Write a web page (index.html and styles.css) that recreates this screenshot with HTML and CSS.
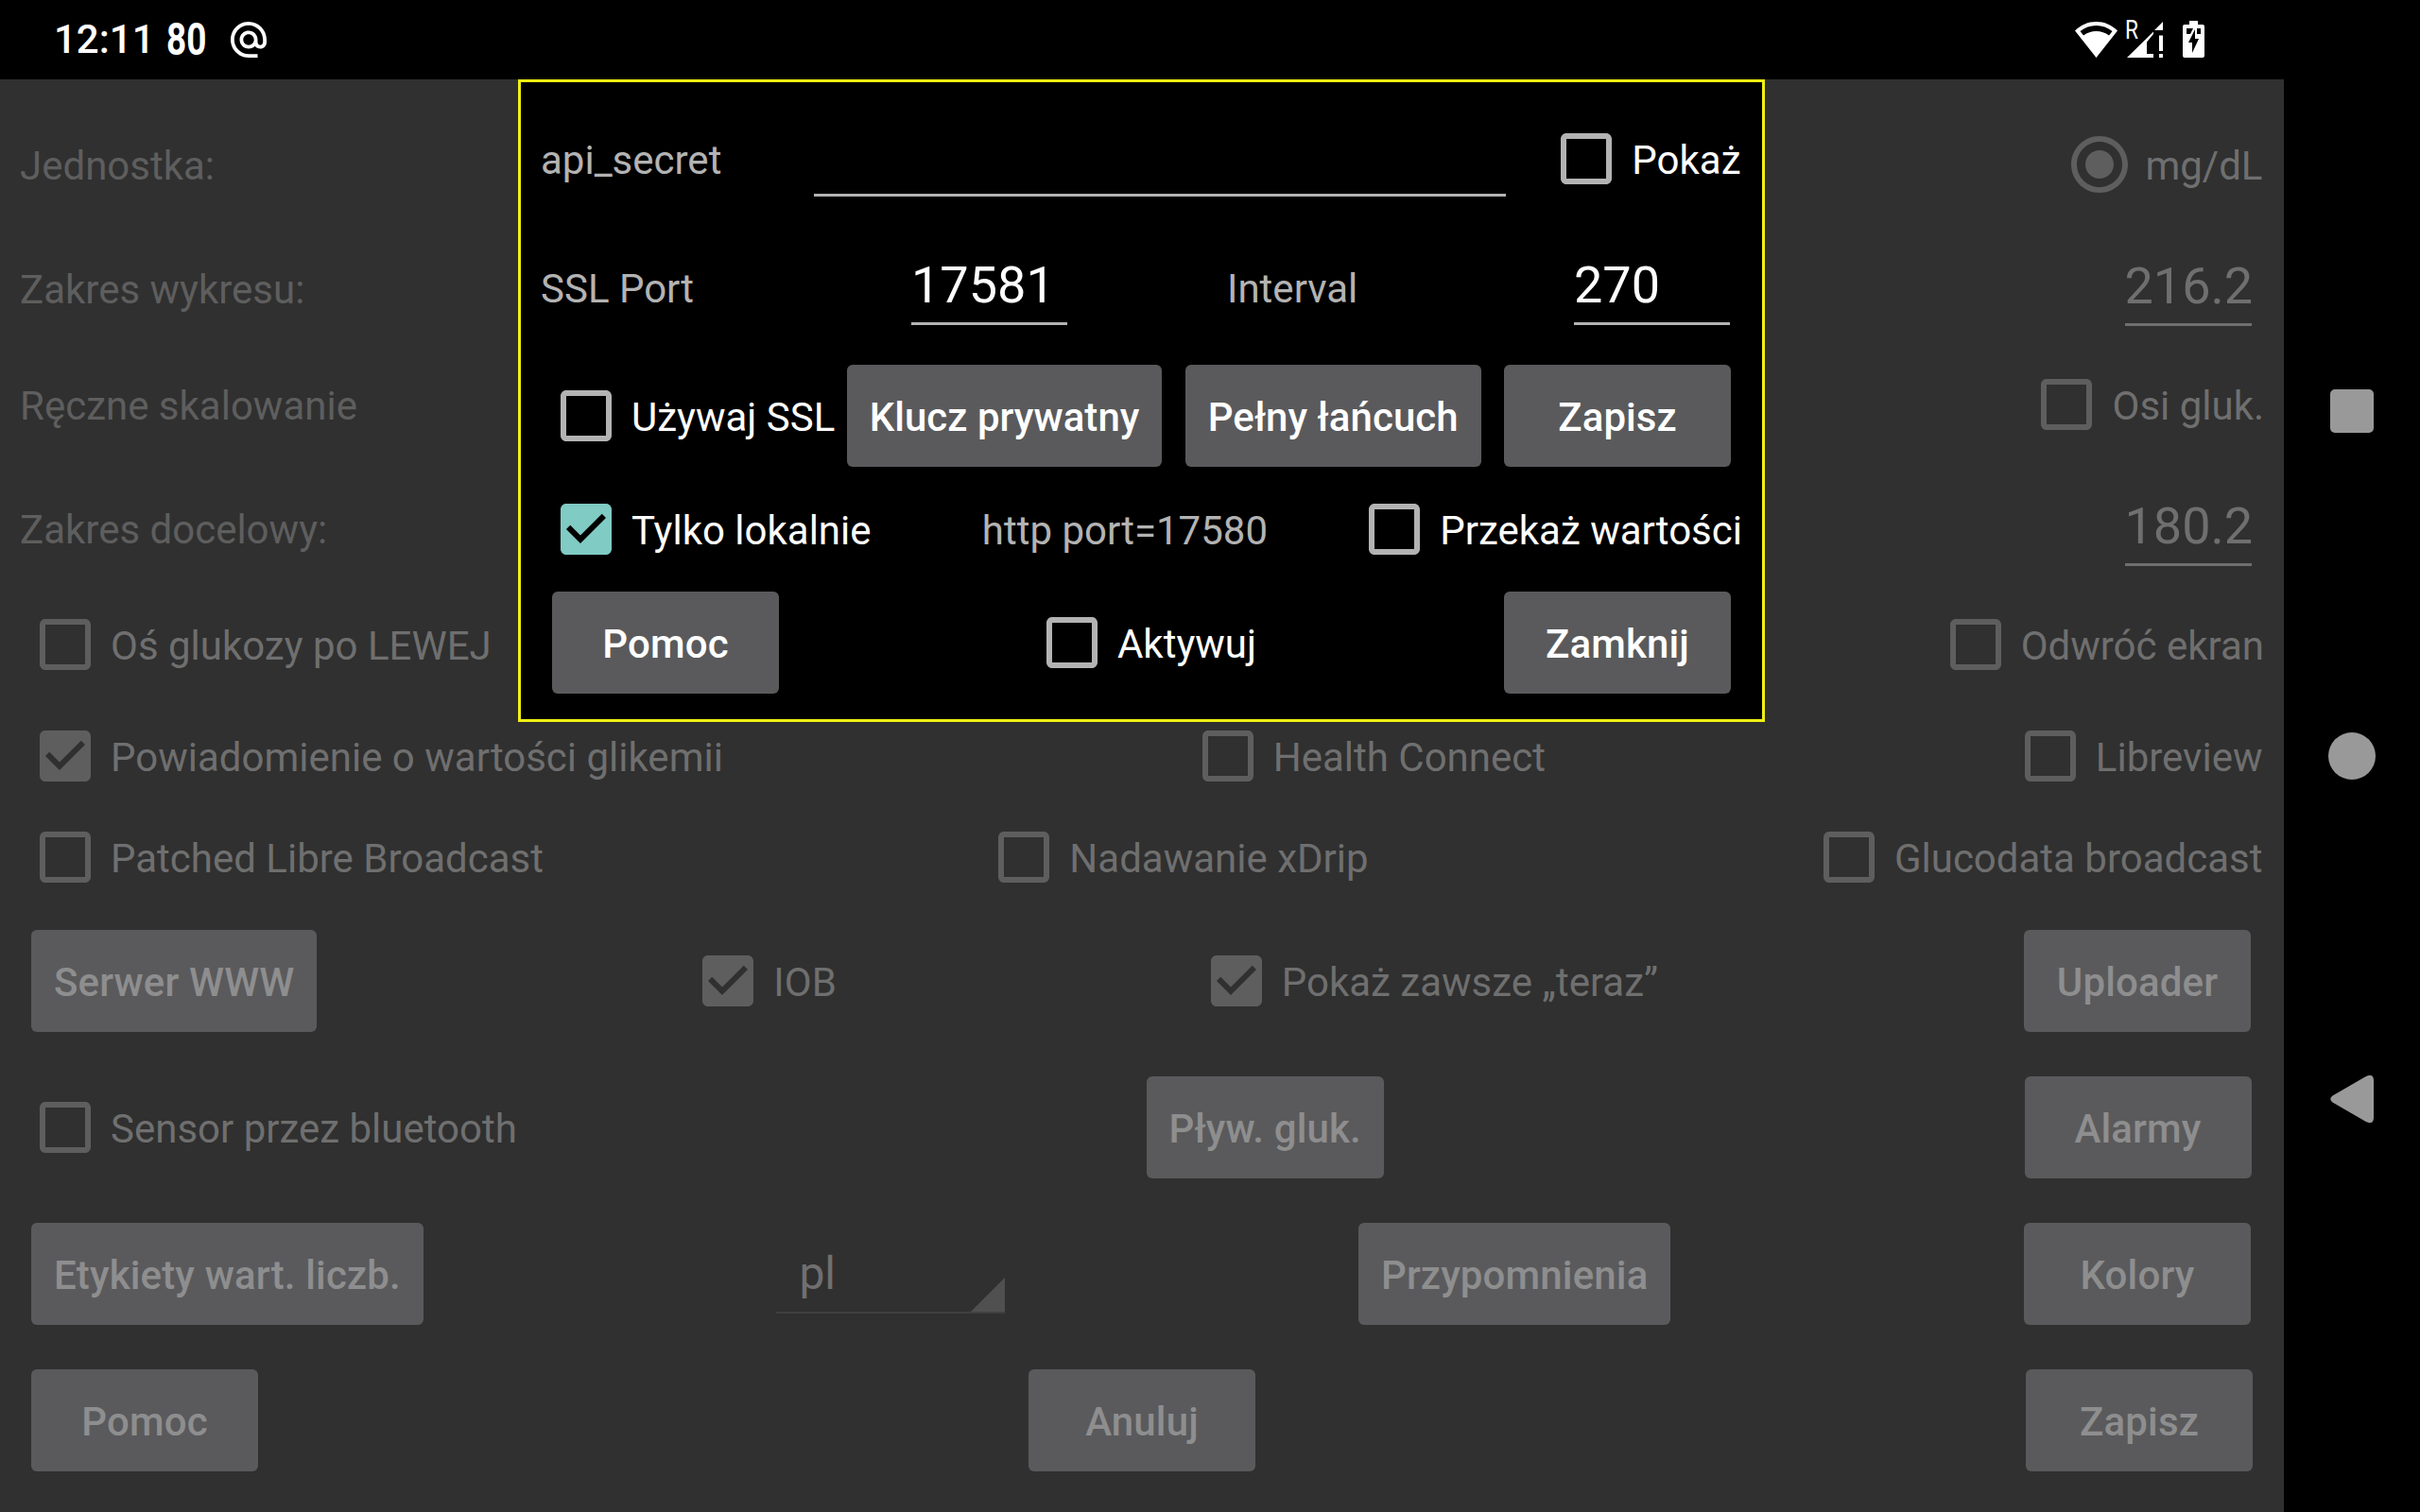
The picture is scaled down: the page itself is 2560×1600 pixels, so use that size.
FILE: index.html
```html
<!DOCTYPE html>
<html lang="pl">
<head>
<meta charset="utf-8">
<title>Ustawienia</title>
<link rel="stylesheet" href="styles.css">
</head>
<body>
<svg class="defs" aria-hidden="true">
  <symbol id="box" viewBox="3 3 18 18"><path d="M19 5v14H5V5h14m0-2H5c-1.1 0-2 .9-2 2v14c0 1.1.9 2 2 2h14c1.1 0 2-.9 2-2V5c0-1.1-.9-2-2-2z"/></symbol>
  <symbol id="box-on" viewBox="3 3 18 18"><path d="M19 3H5c-1.11 0-2 .9-2 2v14c0 1.1.89 2 2 2h14c1.11 0 2-.9 2-2V5c0-1.1-.89-2-2-2zm-9 14l-5-5 1.41-1.41L10 14.17l7.59-7.59L19 8l-9 9z"/></symbol>
  <symbol id="radio-on" viewBox="2 2 20 20"><path d="M12 7c-2.76 0-5 2.24-5 5s2.240 5 5 5 5-2.240 5-5-2.240-5-5-5zm0-5C6.480 2 2 6.480 2 12s4.480 10 10 10 10-4.480 10-10S17.520 2 12 2zm0 18c-4.420 0-8-3.580-8-8s3.580-8 8-8 8 3.580 8 8-3.580 8-8 8z"/></symbol>
</svg>
<div class="screen">
  <div class="app">
    <header class="status">
      <div class="status-left">
        <span class="clock">12:11</span>
        <span class="glucose">80</span>
        <svg class="at" viewBox="2 1.95 20 20"><path d="M12 1.950c-5.520 0-10 4.480-10 10s4.480 10 10 10h5v-2h-5c-4.340 0-8-3.660-8-8s3.660-8 8-8 8 3.660 8 8v1.430c0 .79-.71 1.570-1.500 1.570s-1.500-.78-1.500-1.570v-1.430c0-2.760-2.240-5-5-5s-5 2.240-5 5 2.240 5 5 5c1.380 0 2.640-.56 3.540-1.470.65.89 1.770 1.470 2.960 1.470 1.970 0 3.500-1.600 3.500-3.570v-1.430c0-5.520-4.480-10-10-10zm0 13c-1.660 0-3-1.340-3-3s1.340-3 3-3 3 1.340 3 3-1.340 3-3 3z"/></svg>
      </div>
      <div class="status-right">
        <svg class="wifi" viewBox="0 0 45 38"><path fill-rule="evenodd" d="M22.500 0C14 0 6.300 3.300 0 9.500L22.500 38 45 9.500C38.700 3.300 31 0 22.500 0zM5.500 10C10.500 6.200 16.200 4 22.500 4s12 2.200 17 6l-3.500 4.500C32 11.500 27.500 10 22.500 10S13 11.500 9 14.500z"/></svg>
        <svg class="signal" viewBox="0 0 40 40"><text x="-1" y="19" textLength="14" lengthAdjust="spacingAndGlyphs">R</text><path d="M39 1v9h-9zM29 11.500v2.500l-7 8.500V35h7v4H1zM35 15.500h4V32h-4zM35 35h4v4h-4z"/></svg>
        <svg class="battery" viewBox="0 0 23 39"><path fill-rule="evenodd" d="M7 0h9v4h5q2 0 2 2v31q0 2-2 2H2q-2 0-2-2V6q0-2 2-2h5zM4 8v6h4l3-6zM15 8v6h4V8zM13 9L6 23h4v11l7-15h-4z"/></svg>
      </div>
    </header>

    <main class="settings">
      <div class="row row-inset"><span class="label">Jednostka:</span><span class="check radio"><svg><use href="#radio-on"/></svg><span>mg/dL</span></span></div>
      <div class="row row-inset"><span class="label">Zakres wykresu:</span><span class="field range">216.2</span></div>
      <div class="row"><span class="label">Ręczne skalowanie</span><span class="check"><svg><use href="#box"/></svg><span>Osi gluk.</span></span></div>
      <div class="row row-inset"><span class="label">Zakres docelowy:</span><span class="field range">180.2</span></div>
      <div class="row"><span class="check"><svg><use href="#box"/></svg><span>Oś glukozy po LEWEJ</span></span><span class="check"><svg><use href="#box"/></svg><span>Odwróć ekran</span></span></div>
      <div class="row row-inset"><span class="check"><svg><use href="#box-on"/></svg><span>Powiadomienie o wartości glikemii</span></span><span class="check"><svg><use href="#box"/></svg><span>Health Connect</span></span><span class="check"><svg><use href="#box"/></svg><span>Libreview</span></span></div>
      <div class="row row-inset"><span class="check"><svg><use href="#box"/></svg><span>Patched Libre Broadcast</span></span><span class="check"><svg><use href="#box"/></svg><span>Nadawanie xDrip</span></span><span class="check"><svg><use href="#box"/></svg><span>Glucodata broadcast</span></span></div>
      <div class="row row-deep"><button class="btn">Serwer WWW</button><span class="check"><svg><use href="#box-on"/></svg><span>IOB</span></span><span class="check"><svg><use href="#box-on"/></svg><span>Pokaż zawsze „teraz”</span></span><button class="btn">Uploader</button></div>
      <div class="row row-inset"><span class="check"><svg><use href="#box"/></svg><span>Sensor przez bluetooth</span></span><button class="btn">Pływ. gluk.</button><button class="btn">Alarmy</button></div>
      <div class="row row-deep"><button class="btn">Etykiety wart. liczb.</button><span class="spinner"><span>pl</span><svg viewBox="0 0 36 36"><path d="M36 0v36H0z"/></svg></span><button class="btn">Przypomnienia</button><button class="btn">Kolory</button></div>
      <div class="row"><button class="btn">Pomoc</button><button class="btn">Anuluj</button><button class="btn">Zapisz</button></div>
    </main>

    <section class="dialog">
      <div class="row row-inset"><span class="label">api_secret</span><span class="field secret"></span><span class="check"><svg><use href="#box"/></svg><span>Pokaż</span></span></div>
      <div class="row ports"><span class="label port-label">SSL Port</span><span class="field port">17581</span><span class="label interval-label">Interval</span><span class="field port">270</span></div>
      <div class="row row-tight"><span class="check"><svg><use href="#box"/></svg><span>Używaj SSL</span></span><button class="btn">Klucz prywatny</button><button class="btn">Pełny łańcuch</button><button class="btn">Zapisz</button></div>
      <div class="row"><span class="check on"><svg><use href="#box-on"/></svg><span>Tylko lokalnie</span></span><span class="label http-port">http port=17580</span><span class="check"><svg><use href="#box"/></svg><span>Przekaż wartości</span></span></div>
      <div class="row"><button class="btn">Pomoc</button><span class="check"><svg><use href="#box"/></svg><span>Aktywuj</span></span><button class="btn">Zamknij</button></div>
    </section>
  </div>

  <nav class="nav">
    <svg class="recent" viewBox="0 0 46 46"><rect width="46" height="46" rx="5"/></svg>
    <svg class="home" viewBox="0 0 50 50"><circle cx="25" cy="25" r="25"/></svg>
    <svg class="back" viewBox="0 0 46 50"><path d="M37 1.500Q45.500-3 46 5v40q-.5 8-9 3.500L2.500 28.500Q-2 25 2.500 21.500z"/></svg>
  </nav>
</div>
</body>
</html>
```
FILE: styles.css
```css
* { box-sizing: border-box; }

body {
  margin: 0;
  background: #000;
  font-family: Roboto, "Noto Sans", sans-serif;
  font-size: 42px;
  line-height: normal;
  white-space: nowrap;
}

.defs { display: none; }

.screen {
  display: flex;
  width: 2560px;
  height: 1600px;
  overflow: hidden;
}

.app {
  position: relative;
  display: flex;
  flex-direction: column;
  width: 2416px;
}

/* Status bar */
.status {
  display: flex;
  justify-content: space-between;
  height: 84px;
  padding: 0 84px 1px 57px;
  color: #fff;
  fill: #fff;
}

.status-left,
.status-right { display: flex; align-items: center; }

.clock { font-weight: 500; }

.glucose {
  width: 41px;
  margin: 0 27px 0 12px;
  font-size: 48px;
  font-weight: 700;
  transform: scaleX(.77);
  transform-origin: left;
}

.at { width: 38px; height: 38px; }
.wifi { width: 45px; height: 38px; margin-right: 9px; }
.signal { width: 40px; height: 40px; margin-right: 20px; overflow: visible; font-size: 27px; }
.battery { width: 23px; height: 39px; }

/* Rows shared by the settings page and the dialog */
.row {
  display: flex;
  align-items: center;
  justify-content: space-between;
  padding: 0 21px;
}

.label { padding-top: 3px; color: var(--label); }

.check {
  display: flex;
  align-items: center;
  gap: 21px;
  padding-left: 21px;
  color: var(--text);
}
.check svg { width: 54px; height: 54px; fill: var(--icon); }
.check span { padding-top: 3px; }
.check.on svg { fill: #80cbc4; }

.radio { gap: 18px; padding-left: 18px; }
.radio svg { width: 60px; height: 60px; }

.field {
  height: 74px;
  margin: 6px 12px 0;
  border-bottom: 3px solid var(--line);
  color: var(--text);
  font-size: 54px;
}

.btn {
  height: 108px;
  min-width: 240px;
  margin: 0 12px;
  padding: 3px 24px 0;
  border: 0;
  border-radius: 6px;
  background: #5a5a5c;
  color: var(--button-text);
  font: 500 42px Roboto, "Noto Sans", sans-serif;
  letter-spacing: .14px;
}

/* Settings page */
.settings {
  --label: #5e5e5e;
  --text: #6f6f6f;
  --icon: #5e5e5e;
  --line: #6f6f6f;
  --button-text: #8e8e8f;
  display: grid;
  grid-template-rows: 180px 82px 164px 98px 148px 88px 126px 136px 174px 136px 174px;
  height: 1516px;
  background: #303030;
}

.row-inset { padding-right: 22.5px; }
.row-deep { padding-right: 23px; }
.range { width: 134px; }

.spinner {
  display: flex;
  align-items: flex-end;
  justify-content: space-between;
  width: 242px;
  height: 84px;
  margin: 0 12px;
  border-bottom: 2px solid #404040;
  color: var(--text);
  font-size: 48px;
}
.spinner span { align-self: flex-start; padding: 13px 0 0 24px; }
.spinner svg { width: 36px; height: 36px; fill: #505050; }

/* Dialog floating over the page */
.dialog {
  --label: #b3b3b3;
  --text: #fff;
  --icon: #b3b3b3;
  --line: #b3b3b3;
  --button-text: #fff;
  position: absolute;
  top: 84px;
  left: 548px;
  display: grid;
  grid-template-columns: minmax(0, 1fr);
  grid-template-rows: 162px 110px 162px 78px 162px;
  width: 1319px;
  height: 680px;
  border: 3px solid #f0f014;
  background: #000;
}

.row-tight .btn { letter-spacing: .04px; }
.secret { width: 732px; margin-left: 72px; }
.port { width: 165px; }
.ports { justify-content: flex-start; }
.port-label { width: 380px; }
.interval-label { width: 355px; margin-left: 157px; }
.http-port { margin-left: 31px; }

/* Navigation bar */
.nav {
  display: flex;
  flex-direction: column;
  align-items: center;
  width: 144px;
  padding-top: 412px;
  fill: #999;
}
.recent { width: 46px; height: 46px; margin-bottom: 317px; }
.home { width: 50px; height: 50px; margin-bottom: 313px; }
.back { width: 46px; height: 50px; }
```
